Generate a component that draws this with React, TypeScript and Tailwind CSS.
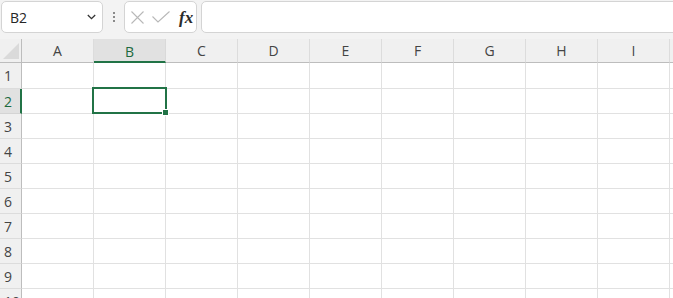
import { Fragment } from 'react'

const columns = ['A', 'B', 'C', 'D', 'E', 'F', 'G', 'H', 'I', '']
const rows = [1, 2, 3, 4, 5, 6, 7, 8, 9, 10]

const selCol = 'B'
const selRow = 2

function Toolbar() {
  return (
    <div className="flex h-[39px] items-start bg-[#f3f3f3] pl-px pt-px">
      <div className="flex h-8 w-[102px] items-center justify-between rounded-[5px] border border-[#d4d4d4] bg-white pl-2 pr-[6px]">
        <span className="text-[14px] text-[#262626]">B2</span>
        <svg width="9" height="6" viewBox="0 0 9 6" aria-hidden>
          <path d="M0.8 1 L4.5 4.7 L8.2 1" fill="none" stroke="#333" strokeWidth="1.3" />
        </svg>
      </div>

      <div className="flex h-8 w-[21px] flex-col items-center justify-center gap-[2px]">
        <span className="h-[2px] w-[2px] bg-[#8a8a8a]" />
        <span className="h-[2px] w-[2px] bg-[#8a8a8a]" />
        <span className="h-[2px] w-[2px] bg-[#8a8a8a]" />
      </div>

      <div className="flex h-8 w-[73px] items-center rounded-[5px] border border-[#d4d4d4] bg-white pl-[6px]">
        <svg width="13" height="13" viewBox="0 0 13 13" aria-hidden>
          <path d="M0.5 0.5 L12.5 12.5 M12.5 0.5 L0.5 12.5" stroke="#b8b8b8" strokeWidth="1.1" />
        </svg>
        <svg className="ml-[8px]" width="18" height="12" viewBox="0 0 18 12" aria-hidden>
          <path d="M0.5 5.5 L6 11 L17.5 0.5" fill="none" stroke="#b8b8b8" strokeWidth="1.1" />
        </svg>
        <span className="ml-[9px] font-['Liberation_Serif',serif] text-[17px] font-bold italic leading-none text-[#2b2b2b]">
          fx
        </span>
      </div>

      <div className="-mr-4 ml-1 h-8 flex-1 rounded-[5px] border border-[#d4d4d4] bg-white" />
    </div>
  )
}

function Sheet() {
  return (
    <div className="relative grid grid-cols-[22px_repeat(10,72px)] grid-rows-[24px_26px_repeat(9,25px)]">
      {/* corner */}
      <div className="relative border-b border-r border-[#bdbdbd] bg-[#f0f0f0]">
        <svg className="absolute bottom-[3px] right-[2px]" width="16" height="16" viewBox="0 0 16 16" aria-hidden>
          <path d="M16 0 L16 16 L0 16 Z" fill="#dadada" />
        </svg>
      </div>
      {columns.map((c, i) => (
        <div
          key={i}
          className={
            c === selCol
              ? 'flex items-center justify-center border-b-2 border-r border-b-[#217346] border-r-[#d9d9d9] bg-[#e1e1e1] pt-[2px] text-[14px] text-[#1d6a3e]'
              : 'flex items-center justify-center border-b border-r border-b-[#bdbdbd] border-r-[#dcdcdc] bg-[#f0f0f0] text-[14px] text-[#444]'
          }
        >
          {c}
        </div>
      ))}

      {rows.map((r) => (
        <Fragment key={r}>
          <div
            className={
              r === selRow
                ? 'flex items-center border-b border-r-2 border-b-[#d4d4d4] border-r-[#217346] bg-[#e1e1e1] pl-1 text-[14px] text-[#1d6a3e]'
                : 'flex items-center border-b border-r border-b-[#dcdcdc] border-r-[#bdbdbd] bg-[#f0f0f0] pl-1 text-[14px] text-[#444]'
            }
          >
            {r}
          </div>
          {columns.map((c, i) => (
            <div key={i} className="border-b border-r border-[#e1e1e1] bg-white" />
          ))}
        </Fragment>
      ))}

      {/* active cell */}
      <div className="pointer-events-none absolute left-[92px] top-[48px] h-[27px] w-[75px] border-2 border-[#217346]" />
      <div className="pointer-events-none absolute left-[162px] top-[70px] h-[7px] w-[7px] border border-white bg-[#217346]" />
    </div>
  )
}

export default function App() {
  return (
    <div className="h-screen overflow-hidden bg-white font-['Open_Sans','Noto_Sans',sans-serif]">
      <Toolbar />
      <Sheet />
    </div>
  )
}
